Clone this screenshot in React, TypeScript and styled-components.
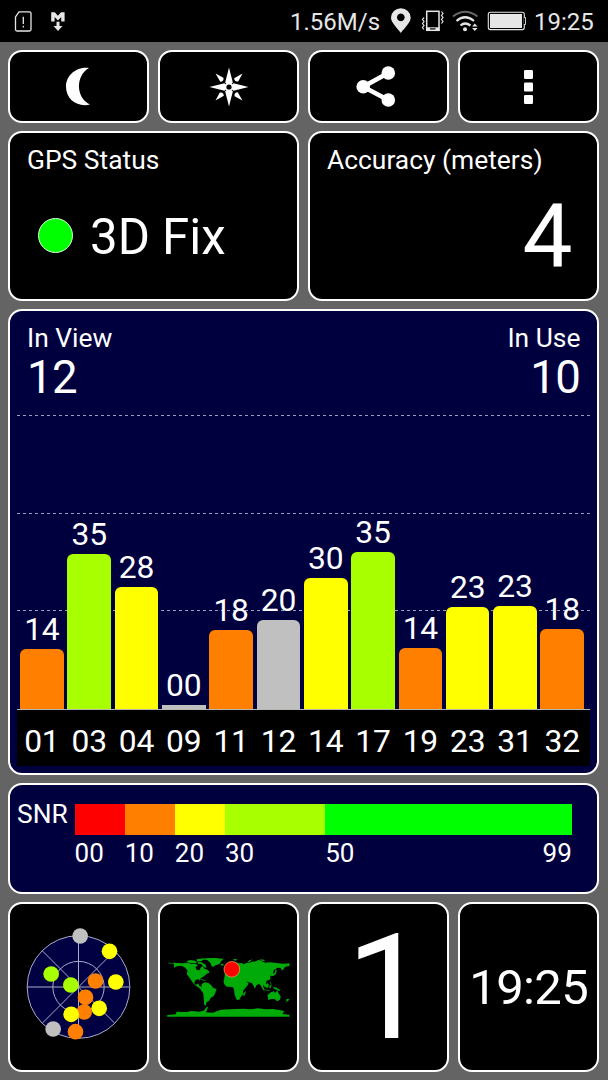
import React from "react";
import styled, { createGlobalStyle } from "styled-components";

const GlobalStyle = createGlobalStyle`
  *, *::before, *::after { box-sizing: border-box; }
  body { margin: 0; background: #646464; color: #fff; font-family: Roboto, sans-serif; }
`;

const ORANGE = "#ff8000";
const YELLOW = "#ffff00";
const LIME = "#a8ff00";
const GRAY = "#c0c0c0";
const NAVY = "#00003f";

const Screen = styled.div`
  width: 608px;
  height: 1080px;
  overflow: hidden;
  background: #646464;
`;

const StatusBar = styled.header`
  display: flex;
  justify-content: space-between;
  height: 42px;
  background: #000;
`;

const StatusText = styled.span<{ $width: number }>`
  width: ${(p) => p.$width}px;
  font-size: 24px;
  line-height: 45px;
  color: #e6e6e6;
  white-space: nowrap;
`;

const StatusGroup = styled.div`
  display: flex;
  svg { display: block; }
`;

const Dashboard = styled.main`
  display: grid;
  grid-template-columns: repeat(4, 1fr);
  grid-template-rows: 73px 170px 466px 111px 170px;
  gap: 8px 8.6px;
  padding: 8px 8.6px 0 8px;
`;

const Panel = styled.section<{ $span?: number; $navy?: boolean }>`
  grid-column: span ${(p) => p.$span ?? 1};
  min-width: 0;
  border: 2px solid #fff;
  border-radius: 14px;
  background: ${(p) => (p.$navy ? NAVY : "#000")};
`;

const ToolButton = styled(Panel).attrs({ as: "button" })`
  display: flex;
  align-items: center;
  justify-content: center;
  padding: 0;
  color: #fff;
`;

const Tile = styled(Panel)`
  display: flex;
  align-items: center;
  justify-content: center;
`;

const Label = styled.div`
  font-size: 26.4px;
  line-height: 30px;
  white-space: nowrap;
`;

const InfoPanel = styled(Panel)`
  padding: 12px 25px 0 17px;
`;

const FixRow = styled.div`
  display: flex;
  align-items: center;
  gap: 17px;
  margin: 33px 0 0 11px;
  font-size: 49.2px;
  line-height: 58px;
`;

const FixLight = styled.span`
  width: 35px;
  height: 35px;
  margin-bottom: 3px;
  border: 1px solid #d8ffd8;
  border-radius: 50%;
  background: #00ff00;
`;

const AccuracyValue = styled.div`
  margin-top: 10px;
  text-align: right;
  font-size: 89px;
  line-height: 104px;
`;

const Summary = styled.div`
  display: flex;
  justify-content: space-between;
  height: 104px;
  padding: 12px 17px 0;
`;

const Count = styled.div<{ $right?: boolean }>`
  text-align: ${(p) => (p.$right ? "right" : "left")};
`;

const CountValue = styled.div`
  font-size: 45.6px;
  line-height: 49px;
  letter-spacing: -0.6px;
`;

const Plot = styled.div`
  display: flex;
  align-items: flex-end;
  gap: 3.65px;
  height: 295px;
  margin: 0 7px;
  padding: 0 6.4px 0 3px;
  border-bottom: 1px solid #b8b8b0;
  background-image: linear-gradient(90deg, #9c9cc0 58%, transparent 58%),
    linear-gradient(90deg, #9c9cc0 58%, transparent 58%),
    linear-gradient(90deg, #9c9cc0 58%, transparent 58%);
  background-size: 6px 1px;
  background-repeat: repeat-x;
  background-position: 0 0, 0 98px, 0 195px;
`;

const Column = styled.div`
  flex: 1 1 0;
  min-width: 0;
  text-align: center;
  font-size: 31.8px;
  line-height: 36px;
  letter-spacing: -0.2px;
`;

const Bar = styled.div<{ $color: string; $height: number }>`
  height: ${(p) => p.$height}px;
  margin-top: 2px;
  border-radius: ${(p) => (p.$height > 10 ? "6px 6px 0 0" : "0")};
  background: ${(p) => p.$color};
`;

const Axis = styled.div`
  display: flex;
  gap: 3.65px;
  height: 56px;
  margin: 0 7px;
  padding: 13px 6.4px 0 3px;
  background: #000;
`;

const ScalePanel = styled(Panel)`
  display: flex;
  padding: 19px 25.6px 0 7px;
`;

const ScaleName = styled(Label)`
  width: 57.6px;
  line-height: 20px;
`;

const Scale = styled.div`
  display: grid;
  flex: 1;
  align-content: start;
  grid-template-columns: 50fr 50fr 50fr 100fr 246fr;
`;

const ScaleStep = styled.div<{ $color: string }>`
  height: 31px;
  background: ${(p) => p.$color};
`;

const ScaleMark = styled.div`
  display: flex;
  justify-content: space-between;
  height: 36px;
  font-size: 26px;
  line-height: 36px;
`;

const FixNumber = styled.div`
  padding: 4px 0 0 17px;
  font-size: 146px;
  line-height: 150px;
`;

const Clock = styled.div`
  padding-top: 1px;
  font-size: 49px;
  line-height: 60px;
  letter-spacing: -0.6px;
`;

const satellites: { id: string; snr: string; height: number; color: string }[] = [
  { id: "01", snr: "14", height: 60, color: ORANGE },
  { id: "03", snr: "35", height: 155, color: LIME },
  { id: "04", snr: "28", height: 122, color: YELLOW },
  { id: "09", snr: "00", height: 4, color: GRAY },
  { id: "11", snr: "18", height: 79, color: ORANGE },
  { id: "12", snr: "20", height: 89, color: GRAY },
  { id: "14", snr: "30", height: 131, color: YELLOW },
  { id: "17", snr: "35", height: 157, color: LIME },
  { id: "19", snr: "14", height: 61, color: ORANGE },
  { id: "23", snr: "23", height: 102, color: YELLOW },
  { id: "31", snr: "23", height: 103, color: YELLOW },
  { id: "32", snr: "18", height: 80, color: ORANGE },
];

const scaleSteps = [
  { color: "#ff0000", marks: ["00"] },
  { color: ORANGE, marks: ["10"] },
  { color: YELLOW, marks: ["20"] },
  { color: LIME, marks: ["30"] },
  { color: "#00ff00", marks: ["50", "99"] },
];

const skyDots: [number, number, string][] = [
  [241, 123, GRAY],
  [329, 169, YELLOW],
  [348, 261, YELLOW],
  [154, 237, LIME],
  [213, 270, LIME],
  [287, 258, ORANGE],
  [298, 340, YELLOW],
  [253, 351, ORANGE],
  [257, 307, ORANGE],
  [214, 358, YELLOW],
  [227, 410, ORANGE],
  [160, 402, GRAY],
];

const NoticeIcons = () => (
  <svg width="80" height="42" fill="none" stroke="#e6e6e6">
    <path d="M19 11.8h10.5q1.5 0 1.5 1.5v16.2q0 1.5-1.5 1.5H17q-1.5 0-1.5-1.5V17z" strokeWidth="1.3" />
    <path d="M23.3 16.8v7.2M23.3 25.8v1.8" strokeWidth="1.3" />
    <path d="M51.2 21.5V12.2h3.6l3.1 3.6 3.1-3.6h3.6v9.3h-3.4v-4.4L58 20.5l-3.4-3.4v4.4z" fill="#e6e6e6" stroke="none" />
    <path d="M56.5 21.8h3v4.3h3L58 31l-4.5-4.9h3z" fill="#e6e6e6" stroke="none" />
  </svg>
);

const SystemIcons = () => (
  <svg width="149" height="42" viewBox="385 0 149 42" fill="none" stroke="#e6e6e6">
    <path
      fillRule="evenodd"
      fill="#e6e6e6"
      stroke="none"
      d="M400.8 33c-3.5-5.2-9.8-10.4-9.8-15.3A9.8 9.3 0 0 1 410.7 17.7C410.7 22.6 404.4 27.8 400.8 33zM400.8 13.5a3.9 3.9 0 1 0 .01 0z"
    />
    <rect x="426.7" y="11.3" width="12.3" height="19" strokeWidth="1.5" />
    <path d="M426 27.3h13.5v3.5H426z" fill="#e6e6e6" stroke="none" />
    <path d="M430 28.9h5.5" stroke="#000" strokeWidth="1.2" />
    <path
      d="M424 17.5l-1.5 2 1.5 2-1.5 2 1.5 2-1.5 2 1.3 2M441.5 11.5l1.5 2-1.5 2 1.5 2-1.5 2 1.5 2-1.5 2"
      strokeWidth="1.2"
    />
    <path d="M453 16.5Q465 7 477.5 16.5" stroke="#666" strokeWidth="2" />
    <path d="M456.5 21Q465 13.5 474 21" strokeWidth="2.2" />
    <path d="M460.5 25.5Q465 21.5 470.5 25.5" strokeWidth="2.2" />
    <circle cx="465" cy="29.2" r="2" fill="#e6e6e6" stroke="none" />
    <path d="M474.8 23.5l2.7 3h-5.4zM474.8 31l2.7-3h-5.4z" fill="#e6e6e6" stroke="none" />
    <rect x="488.3" y="12.3" width="36" height="17.3" rx="2" strokeWidth="1.1" />
    <rect x="490" y="14" width="32" height="14" fill="#e6e6e6" stroke="none" />
    <path d="M525 17.5v7" stroke="#000" strokeWidth="2" />
    <path d="M524 17.5h1.5v7H524" strokeWidth="0.9" />
  </svg>
);

const MoonIcon = () => (
  <svg width="137" height="69" viewBox="10 52 137 69" fill="#fff">
    <path d="M89 68C78 66.5 66 74 66 86.8C66 100 78 107.5 90 104.5C75.5 97.5 75.5 75.5 89 68z" />
  </svg>
);

const CompassIcon = () => (
  <svg width="40" height="40" viewBox="-20 -20 40 40" fill="#fff">
    {[0, 90, 180, 270].map((a) => (
      <g key={a} transform={`rotate(${a})`}>
        <path d="M0-19.5L3.8-4.5L0 0L-3.8-4.5z" />
        <path d="M13.5-13.5L9.2-5.6Q5.5-4.8 5.2-8.7z" />
      </g>
    ))}
    <rect x="-4" y="-4" width="8" height="8" transform="rotate(45)" />
    <circle r="2.6" fill="#000" />
  </svg>
);

const ShareIcon = () => (
  <svg width="137" height="69" viewBox="310.3 52 137 69" fill="#fff" stroke="#fff">
    <path d="M388.5 73L363.5 86.7L388.5 100" fill="none" strokeWidth="4.6" />
    <g stroke="none">
      <circle cx="363.5" cy="86.7" r="6.8" />
      <circle cx="388.6" cy="73" r="6.8" />
      <circle cx="388.6" cy="100" r="6.8" />
    </g>
  </svg>
);

const MoreIcon = () => (
  <svg width="10" height="34" fill="#fff">
    <rect width="9" height="9" rx="1.3" />
    <rect y="12.5" width="9" height="9" rx="1.3" />
    <rect y="25" width="9" height="9" rx="1.3" />
  </svg>
);

const SkyView = () => (
  <svg width="137" height="166" viewBox="30.5 27 411 498">
    <circle cx="236" cy="276" r="154" fill="#000042" />
    <g fill="none" stroke="#aaaacb" strokeWidth="3">
      <circle cx="236" cy="276" r="154" />
      <circle cx="236" cy="276" r="77" />
      <path d="M82 276H390M236 122V430M127 167L345 385M345 167L127 385" />
    </g>
    {skyDots.map(([x, y, color]) => (
      <circle key={`${x}-${y}`} cx={x} cy={y} r="23.5" fill={color} />
    ))}
  </svg>
);

const WorldMap = () => (
  <svg width="137" height="166" viewBox="24.5 27 411 498" fill="#00aa08">
    {/* North and Central America */}
    <path d="M46 203l10 3 8-3 14 1 14 1 14-2 14 4 12-1 6 5-7 6 3 7 9 2 3-8 6-4 7 8 8 2 7 8-10 5-8 7-8 5-6 8-2-5-8 2-5 9 5 7 8-5 2 7 6 3 2 8 8 2-6 3-10-9-12-8-8-9-9-14-8-10 2-12-10-10-10-4-12 2-8 4-1-12-13-3z" />
    {/* Arctic islands */}
    <path d="M104 198l12-3 14 2 6 7-12 1-14-2zM134 193l12-2 12-1-8 8-14 2zM138 202l10-1 14 9 2 9-9-4-7-8-10-1z" />
    <path d="M146 192l24-3 24 0 21 3-7 7-5 8-12 4-7 5-5-3-3-9-10-9-18-2z" />
    <path d="M207 207l8-1 1 5-7 1zM244 192l14 1-6 4-7-2zM146 252l9 2 9 4-7-1-10-3z" />
    {/* South America */}
    <path d="M150 267l9-5 11 2 10 8 3 6 11 4-3 10-5 11-9 5-5 9-7 4-3 8 1 3-6-3-1-16-2-19-7-8z" />
    {/* Europe and Asia */}
    <path d="M219 235l2-12 8-5 2-8 7-7 9-3 14 5 10-1 3 4 10-4 10-1 7-3 12-1 7-5 7 3 13 6 14-1 21 2 18 2 20-1v8l-14 3-5 8-5 2-2-7-9-1-12 7-3 12-8 6 1 9-6 4-6 1-2 9 3 6-6 5-5-8-1 9 6 10-5-2-6-12-6-8-8 5-5 10-4-9-5-8-12-3-5-2 8 7-8 8-9 3-8-12-4-9-15-3-8 1-10-5-11 3z" />
    <path d="M324 193l12 1 4 4-12-1zM286 202l7-6 9-3-10 9zM356 244l4-7 9-4 2-8-2-4 6 5-3 11-8 6z" />
    {/* Africa */}
    <path d="M219 246l12-3 12 0 12 5 11 0 8 12 5 9 9 1-8 10-6 7-1 12-6 6-3 8-8 3-5-9-3-11-1-11-4-8-10-2-9 0-7-8-2-8z" />
    <path d="M276 293l6-5-1 7-4 8-4-2z" />
    {/* Southeast Asia and Oceania */}
    <path d="M327 268l8 8 4 9-6-5zM340 270l8-6 3 6-3 9-7-2zM354 256l3 8 4 7-5-4zM353 271l6 0-3 9-4-2zM336 283l12 2 10 1-12 1zM365 275l11 4 10 7-5 2-8-4-8-4z" />
    <path d="M347 300l10-8 9-3 3 4 8-6 4 9 6 9-3 9-8 5-8-7-10 0-9 3z" />
    <path d="M403 313l6-2 4 3-8 6-5 3 4-5z" />
    {/* Antarctica */}
    <path d="M46 360l26-2 2-8 30 1 16-3 22 2 13-3 9-10 5-1-4 10-3 6 22 1 10-4 14-5 24-1 20-1 24-1 22 2 20-3 24 3 22-1 18 3 15 3-5 9 21 2v6H46z" />
    <circle cx="240" cy="223" r="23.5" fill="#ff0000" stroke="#e3b85a" strokeWidth="2" />
  </svg>
);

export default function App() {
  return (
    <Screen>
      <GlobalStyle />
      <StatusBar>
        <NoticeIcons />
        <StatusGroup>
          <StatusText $width={95}>1.56M/s</StatusText>
          <SystemIcons />
          <StatusText $width={74}>19:25</StatusText>
        </StatusGroup>
      </StatusBar>
      <Dashboard>
        <ToolButton aria-label="Night mode"><MoonIcon /></ToolButton>
        <ToolButton aria-label="Compass"><CompassIcon /></ToolButton>
        <ToolButton aria-label="Share"><ShareIcon /></ToolButton>
        <ToolButton aria-label="More"><MoreIcon /></ToolButton>

        <InfoPanel $span={2}>
          <Label>GPS Status</Label>
          <FixRow>
            <FixLight />
            3D Fix
          </FixRow>
        </InfoPanel>
        <InfoPanel $span={2}>
          <Label>Accuracy (meters)</Label>
          <AccuracyValue>4</AccuracyValue>
        </InfoPanel>

        <Panel $span={4} $navy>
          <Summary>
            <Count>
              <Label>In View</Label>
              <CountValue>12</CountValue>
            </Count>
            <Count $right>
              <Label>In Use</Label>
              <CountValue>10</CountValue>
            </Count>
          </Summary>
          <Plot>
            {satellites.map((s) => (
              <Column key={s.id}>
                {s.snr}
                <Bar $color={s.color} $height={s.height} />
              </Column>
            ))}
          </Plot>
          <Axis>
            {satellites.map((s) => (
              <Column key={s.id}>{s.id}</Column>
            ))}
          </Axis>
        </Panel>

        <ScalePanel $span={4} $navy>
          <ScaleName>SNR</ScaleName>
          <Scale>
            {scaleSteps.map((s) => (
              <ScaleStep key={s.color} $color={s.color} />
            ))}
            {scaleSteps.map((s) => (
              <ScaleMark key={s.color}>
                {s.marks.map((m) => (
                  <span key={m}>{m}</span>
                ))}
              </ScaleMark>
            ))}
          </Scale>
        </ScalePanel>

        <Tile><SkyView /></Tile>
        <Tile><WorldMap /></Tile>
        <Tile><FixNumber>1</FixNumber></Tile>
        <Tile><Clock>19:25</Clock></Tile>
      </Dashboard>
    </Screen>
  );
}
